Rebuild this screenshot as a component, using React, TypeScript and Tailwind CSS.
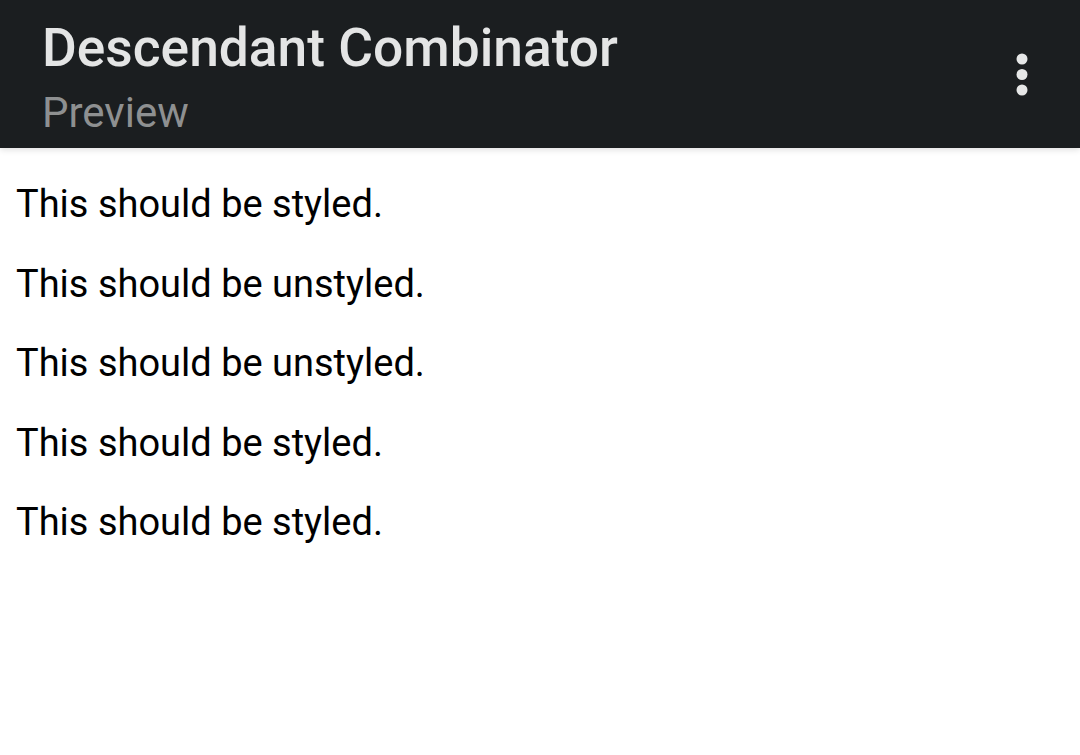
export default function App() {
  const lines = [
    "This should be styled.",
    "This should be unstyled.",
    "This should be unstyled.",
    "This should be styled.",
    "This should be styled.",
  ];
  return (
    <div className="min-h-[755px] bg-white" style={{ fontFamily: "Roboto, 'Noto Sans', sans-serif" }}>
      <header className="relative z-10 flex h-[148px] items-start justify-between bg-[#1b1e20] pl-[42px] pr-[52px] shadow-[0_2px_6px_rgba(0,0,0,0.12)]">
        <div className="pt-[17px]">
          <h1 className="text-[53.3px] font-medium leading-[62px] text-[#e4e5e5]">Descendant Combinator</h1>
          <p className="mt-[9px] text-[42px] leading-[50px] text-[#8e9091]">Preview</p>
        </div>
        <svg className="mt-[53px]" width="12" height="43" viewBox="0 0 12 43" fill="#e6e7e7">
          <circle cx="6" cy="6" r="5.5" />
          <circle cx="6" cy="21.5" r="5.5" />
          <circle cx="6" cy="37" r="5.5" />
        </svg>
      </header>
      <main className="pl-[16px] pr-[17px] pt-[33px]">
        {lines.map((t, i) => (
          <p key={i} className="mb-[33.5px] text-[38px] leading-[46px] text-black">
            {t}
          </p>
        ))}
      </main>
    </div>
  );
}
